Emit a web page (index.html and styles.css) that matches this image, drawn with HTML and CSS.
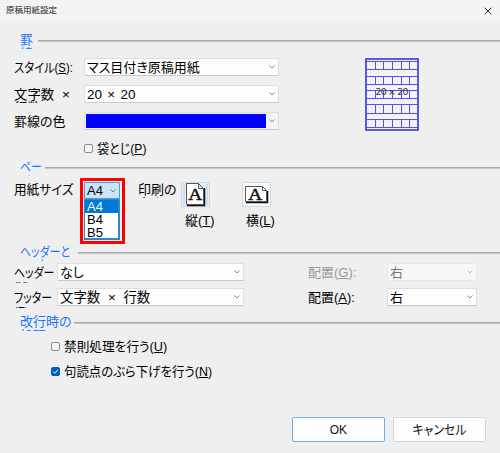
FILE: index.html
```html
<!DOCTYPE html>
<html lang="ja">
<head>
<meta charset="utf-8">
<title>原稿用紙設定</title>
<link rel="stylesheet" href="styles.css">
</head>
<body>
<div class="dialog">
  <header class="titlebar"><span class="title">原稿用紙設定</span>
    <svg class="close" viewBox="0 0 8 8"><path d="M.7.7l6.6 6.6M7.3.7L.7 7.3"/></svg>
  </header>

  <section class="group ruled">
    <h2 class="legend"><span class="legend-text w-one">罫<br>線</span></h2>
    <div class="ruled-body">
      <div class="fields">
        <div class="row"><span class="label style-label">スタイル(<u>S</u>):</span><div class="select wide"><span class="value-style">マス目付き原稿用紙</span><svg class="chev" viewBox="0 0 6 4"><path d="M.5.5L3 3 5.5.5"/></svg></div></div>
        <div class="row"><span class="label count-label">文字数 ×<br>行数(<u>M</u>):</span><div class="select wide"><span class="value-count">20 × 20</span><svg class="chev" viewBox="0 0 6 4"><path d="M.5.5L3 3 5.5.5"/></svg></div></div>
        <div class="row"><span class="label">罫線の色<br>(<u>C</u>):</span><div class="select wide color"><i class="swatch"></i><svg class="chev" viewBox="0 0 6 4"><path d="M.5.5L3 3 5.5.5"/></svg></div></div>
        <label class="check fold"><i class="box"></i><span class="fold-text">袋とじ(<u>P</u>)</span></label>
      </div>
      <svg class="preview" viewBox="0 0 54 73">
        <rect x="1" y="1" width="52" height="71" fill="#f3f3f3" stroke="#2424f2" stroke-width="1.5"/>
        <g stroke="#5252f4" fill="none">
          <path d="M1 3.5H53M1 11.5H53M1 18.5H53M1 26.5H53M1 32.5H53M1 40.5H53M1 46.5H53M1 55.5H53M1 61.5H53M1 69.5H53"/>
          <path d="M10.500 4v7m8-7v7m9-7v7m9-7v7m8-7v7M10.500 19v7m8-7v7m9-7v7m9-7v7m8-7v7M10.500 33v7m8-7v7m9-7v7m9-7v7m8-7v7M10.500 47v8m8-8v8m9-8v8m9-8v8m8-8v8M10.500 62v7m8-7v7m9-7v7m9-7v7m8-7v7"/>
        </g>
        <text x="10.500" y="36.500" textLength="33">20 × 20</text>
      </svg>
    </div>
  </section>

  <section class="group page">
    <h2 class="legend"><span class="legend-text w-page"><span class="narrow-kana">ペー<br>ジ</span></span></h2>
    <div class="page-body">
      <span class="label size-label">用紙サイズ<br>(<u>Z</u>):</span>
      <div class="highlight">
        <div class="select open"><span>A4</span><svg class="chev" viewBox="0 0 6 4"><path d="M.5.5L3 3 5.5.5"/></svg></div>
        <ul class="options"><li class="selected">A4</li><li>B4</li><li>B5</li></ul>
      </div>
      <span class="label orient-label">印刷の<br>向き</span>
      <div class="orient"><div class="paper active"><svg viewBox="0 0 28 25"><path class="sides" d="M3 2v21M26 2v21"/><path class="shadow" d="M6 23.500h17.500V6"/><path class="sheet" d="M5.500 1.500h12l5 5v16h-17zM17.500 1.500v5h5"/><text x="7.200" y="17.500" textLength="14" lengthAdjust="spacingAndGlyphs">A</text></svg></div><span>縦(<u>T</u>)</span></div>
      <div class="orient"><div class="paper"><svg viewBox="0 0 28 25"><path class="shadow" d="M4 20.500h21.500V9"/><path class="sheet" d="M3.500 4.500h17l4 4v11h-21zM20.500 4.500v4h4"/><text x="6.200" y="17.500" textLength="14" lengthAdjust="spacingAndGlyphs">A</text></svg></div><span>横(<u>L</u>)</span></div>
    </div>
  </section>

  <section class="group headfoot">
    <h2 class="legend"><span class="legend-text w-head"><span class="narrow-kana">ヘッダーと<br>フッター</span></span></h2>
    <div class="hf-row"><span class="label"><span class="narrow-kana">ヘッダー<br>(<u>H</u>):</span></span><div class="select"><span>なし</span><svg class="chev" viewBox="0 0 6 4"><path d="M.5.5L3 3 5.5.5"/></svg></div><span class="align disabled">配置(<u>G</u>):</span><div class="select disabled"><span>右</span><svg class="chev" viewBox="0 0 6 4"><path d="M.5.5L3 3 5.5.5"/></svg></div></div>
    <div class="hf-row"><span class="label"><span class="narrow-kana">フッター<br>(<u>F</u>):</span></span><div class="select"><span class="value-lines">文字数 × 行数</span><svg class="chev" viewBox="0 0 6 4"><path d="M.5.5L3 3 5.5.5"/></svg></div><span class="align">配置(<u>A</u>):</span><div class="select"><span>右</span><svg class="chev" viewBox="0 0 6 4"><path d="M.5.5L3 3 5.5.5"/></svg></div></div>
  </section>

  <section class="group breaks">
    <h2 class="legend"><span class="legend-text w-break">改行時の<br>処理</span></h2>
    <label class="check"><i class="box"></i><span class="kinsoku">禁則処理を行う(<u>U</u>)</span></label>
    <label class="check"><i class="box on"><svg viewBox="0 0 9 9"><path d="M2 4.500l1.700 1.700L7 2.900"/></svg></i><span class="hang">句読点のぶら下げを行う(<u>N</u>)</span></label>
  </section>

  <footer class="actions"><button class="primary"><span class="ok">OK</span></button><button><span class="cancel">キャンセル</span></button></footer>
</div>
</body>
</html>
```

FILE: styles.css
```css
* { box-sizing: border-box; }
body { margin: 0; }
.dialog {
  width: 500px; height: 453px; overflow: hidden;
  background: #efefef; color: #000;
  font: 13px/13px "Liberation Sans", "Noto Sans CJK JP", sans-serif;
  font-feature-settings: "palt";
  display: flex; flex-direction: column;
}
u { text-underline-offset: 1px; text-decoration-thickness: 1px; }
.titlebar {
  height: 21px; background: #f3f3f3; flex: none;
  display: flex; justify-content: space-between; align-items: center;
  padding: 0 8px 0 6px; font-size: 8.5px; color: #222;
}
.close { width: 8px; height: 8px; fill: none; stroke: #333; stroke-width: 1; }
.group { flex: none; }
.ruled { height: 138px; padding-top: 13px; }
.page { height: 85px; padding-top: 2px; }
.headfoot { height: 71px; padding-top: 2px; }
.breaks { height: 72px; padding-top: 1px; }

.legend {
  display: flex; align-items: flex-start; height: 15px; margin: 0 0 0 20px;
  font-size: 13px; line-height: 14px; font-weight: 400; color: #1673ff;
}
.legend::after { content: ""; flex: 1; height: 1px; margin-top: 6px; background: #aaa; border-bottom: 1px solid #c6c6c6; }
.legend-text { height: 16px; overflow: hidden; white-space: nowrap; margin-top: -1px; }
.w-one { width: 18px; }
.w-page { width: 25px; }
.w-head { width: 58px; }
.w-break { width: 54px; }

.label { height: 15px; overflow: hidden; white-space: nowrap; line-height: 14px; }
.narrow-kana, .fold-text, .kinsoku, .hang, .cancel, .ok { display: inline-block; transform-origin: 0 50%; }
.narrow-kana { transform: scaleX(.84); }
.style-label { transform: scaleX(.87); transform-origin: 0 50%; }
.size-label { transform: scaleX(.97); transform-origin: 0 50%; }
.count-label { font-size: 13.400px; word-spacing: 4px; }
.value-count { font-size: 13.500px; word-spacing: 1.500px; }
.value-lines { font-size: 13.400px; word-spacing: 4px; }
.fold-text { transform: scaleX(.93); }
.kinsoku { transform: scaleX(.975); }
.hang { transform: scaleX(.955); }
.cancel { transform: scaleX(.92); transform-origin: 50% 50%; }
.ok { transform: scaleX(.92); transform-origin: 50% 50%; }
.select {
  height: 18px; background: #fdfdfd; border: 1px solid #dedede; border-bottom-color: #c9c9c9;
  border-radius: 1px; padding: 0 3px 0 2px; white-space: nowrap;
  display: flex; align-items: center; justify-content: space-between;
}
.chev { width: 6px; height: 4px; flex: none; fill: none; stroke: #777; stroke-width: .9; }

.ruled-body { display: flex; padding: 9px 0 0 14px; }
.fields { width: 351px; }
.row { display: grid; grid-template-columns: 70px 195px; height: 27px; align-items: start; }
.row .label { margin-top: 3px; }
.row .select { width: 195px; }
.color { background: #f4f4f4; padding-left: 1px; }
.swatch { width: 180px; height: 14px; background: #00f; }
.preview { width: 54px; height: 73px; }
.preview text { font: 9.5px "DejaVu Sans", sans-serif; fill: #333; }
.check { display: flex; align-items: center; gap: 4px; height: 16px; white-space: nowrap; }
.fold { margin-left: 70px; margin-top: 1px; }
.box { width: 9px; height: 9px; border: 1px solid #8c8c8c; border-radius: 2px; background: #f5f5f5; flex: none; }
.box.on { background: #005fb8; border-color: #005fb8; }
.box.on svg { display: block; width: 9px; height: 9px; margin: -1px; fill: none; stroke: #fff; stroke-width: 1; }

.page-body { display: flex; align-items: flex-start; padding-left: 14px; }
.page-body .label { margin-top: 7px; }
.size-label { width: 66px; }
.highlight { width: 45px; height: 66px; border: 3px solid #f00; margin-top: 2px; padding: 1px; }
.select.open { width: 36px; height: 17px; background: #cce4f7; border-color: #4d9bd8; }
.options { list-style: none; width: 36px; height: 41px; margin: 0; padding: 0; border: 1px solid #2d87ce; border-right-width: 2px; border-bottom-width: 2px; background: #fff; }
.options li { height: 13px; padding-left: 2px; line-height: 13px; }
.options .selected { background: #0078d7; color: #fff; }
.orient-label { margin-left: 13px; width: 43px; }
.orient { width: 61px; display: flex; flex-direction: column; white-space: nowrap; margin-top: 6px; }
.orient > span { margin: 7px 0 0 4px; }
.paper { width: 29px; height: 25px; border: 1px solid #ccd9e8; background: #f8fafc; }
.paper.active { background: #e6edf5; }
.paper svg { display: block; width: 28px; height: 25px; margin: -1px 0 0 -1px; }
.sheet { fill: #fff; stroke: #444; stroke-width: .9; }
.shadow { fill: none; stroke: #111; stroke-width: 1.500; }
.sides { fill: none; stroke: #bccddd; }
.paper text { font: 17px "Liberation Serif", serif; fill: #111; stroke: #111; stroke-width: .5; }

.hf-row { display: grid; grid-template-columns: 43px 187px 64px 79px 90px; height: 25px; margin-left: 14px; align-items: start; }
.legend + .hf-row { margin-top: 2px; }
.hf-row .label { margin-top: 3px; height: 17px; }
.align { grid-column: 4; margin-top: 3px; }
.hf-row > .select:last-child { grid-column: 5; }
.disabled { color: #999; }
.select.disabled { background: #f7f7f7; border-color: #e8e8e8; color: #777; }
.select.disabled .chev { stroke: #b5b5b5; }

.breaks .check { margin: 8px 0 0 51px; height: 17px; }
.breaks .legend { margin-bottom: 6px; }
.breaks .legend + .check { margin-top: 7px; }
.actions { display: flex; gap: 8px; margin: 30px 0 0 292px; }
button {
  width: 93px; height: 25px; padding: 0; border: 1px solid #d5d5d5; border-radius: 2px;
  background: #fdfdfd; color: #111; font: inherit; font-feature-settings: "palt";
}
button.primary { border-color: #6aaee8; }
```
